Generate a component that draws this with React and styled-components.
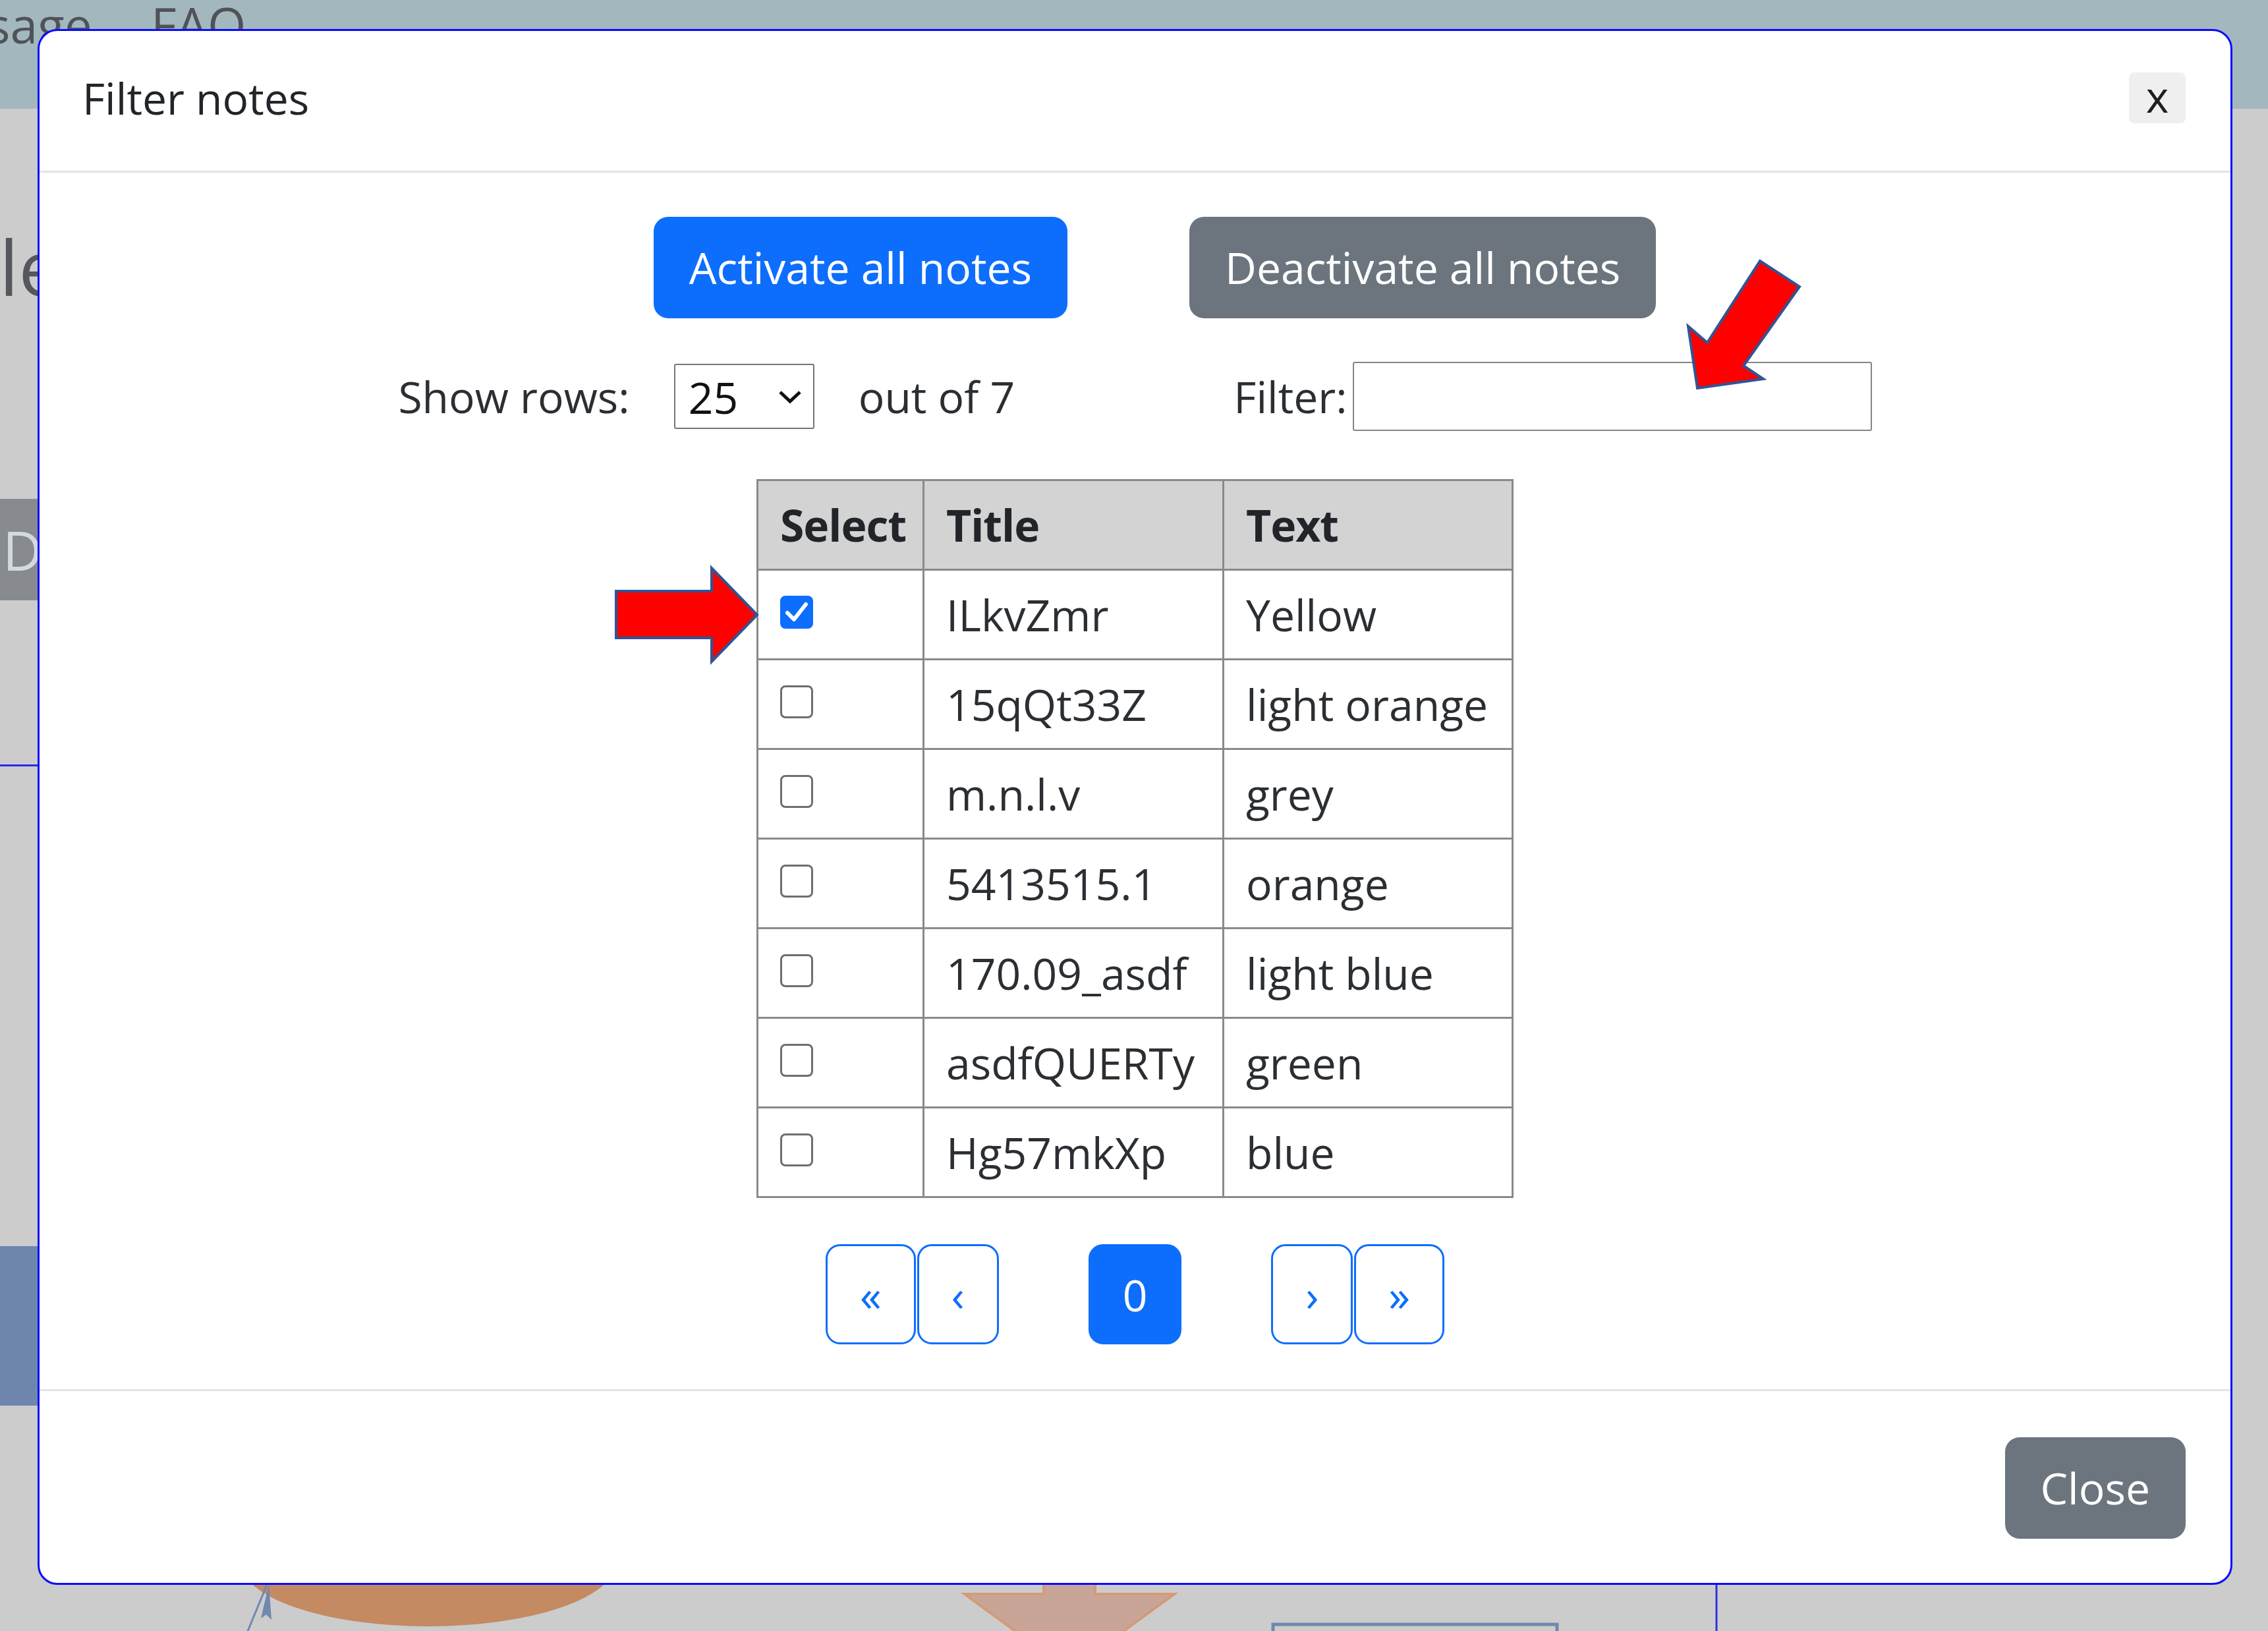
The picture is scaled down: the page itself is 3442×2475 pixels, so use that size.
import React from "react";
import styled, { createGlobalStyle } from "styled-components";

const GlobalStyle = createGlobalStyle`
  html, body {
    margin: 0;
    padding: 0;
  }
  body {
    font-family: "Open Sans", "Liberation Sans", sans-serif;
    background: #cccccc;
    color: #212529;
  }
  * {
    box-sizing: border-box;
  }
`;

const Page = styled.div`
  position: relative;
  width: 3442px;
  height: 2475px;
  overflow: hidden;
  background: #cccccc;
  display: flex;
  flex-direction: column;
`;

/* ---------- page behind the dialog ---------- */

const TopBar = styled.header`
  flex: none;
  height: 165px;
  background: #a3b8be;
`;

const NavList = styled.nav`
  display: flex;
  gap: 89px;
  margin-left: -75px;
`;

const NavLink = styled.span`
  font-size: 75px;
  line-height: 1;
  color: #4f5357;
`;

const PageContent = styled.main`
  position: relative;
  flex: 1;
  display: flex;
  flex-direction: column;
  align-items: flex-start;
`;

const PageHeading = styled.h1`
  margin: 170px 0 0 -369px;
  font-size: 116px;
  line-height: 1.2;
  font-weight: 400;
  color: #54585c;
  white-space: nowrap;
`;

const PageButton = styled.div`
  margin: 283px 0 0 -26px;
  height: 154px;
  padding: 0 60px 0 30px;
  background: #878b90;
  color: #d3d9df;
  font-size: 83px;
  line-height: 154px;
  white-space: nowrap;
`;

const PageRule = styled.div`
  margin-top: 249px;
  width: 300px;
  height: 3px;
  background: #2a2ae8;
`;

const PageBlock = styled.div`
  margin-top: 728px;
  width: 300px;
  height: 242px;
  background: #6e86ae;
`;

const DiagramCanvas = styled.svg`
  position: absolute;
  left: 0;
  bottom: 0;
  width: 2700px;
  height: 95px;
`;

/* ---------- dialog ---------- */

const Modal = styled.section`
  position: absolute;
  left: 57px;
  top: 44px;
  width: 3331px;
  background: #ffffff;
  border: 3px solid #0c0cff;
  border-radius: 30px;
  display: flex;
  flex-direction: column;
`;

const ModalHeader = styled.div`
  display: flex;
  align-items: center;
  justify-content: space-between;
  padding: 52px 68px 61px 65px;
  border-bottom: 3px solid #e1e4e8;
`;

const ModalTitle = styled.h5`
  margin: 0;
  font-size: 66px;
  line-height: 99px;
  font-weight: 400;
  color: #212529;
`;

const CloseX = styled.button`
  width: 86px;
  height: 77px;
  border: none;
  border-radius: 8px;
  background: #efefef;
  color: #1e1e1e;
  font-family: inherit;
  font-size: 66px;
  line-height: 1;
  padding: 0 0 8px;
  display: flex;
  align-items: center;
  justify-content: center;
`;

const ModalBody = styled.div`
  display: flex;
  flex-direction: column;
  align-items: center;
  padding: 67px 0 68px;
`;

const ButtonRow = styled.div`
  display: flex;
  gap: 185px;
  padding-left: 60px;
`;

const Btn = styled.button`
  border: none;
  border-radius: 22px;
  padding: 27px 54px 28px;
  font-family: inherit;
  font-size: 66px;
  line-height: 99px;
  color: #ffffff;
  background: ${({ $variant }) => ($variant === "primary" ? "#0d6efd" : "#6c757d")};
  white-space: nowrap;
`;

const ControlsRow = styled.div`
  display: flex;
  align-items: center;
  gap: 332px;
  margin-top: 66px;
  height: 105px;
`;

const ControlGroup = styled.div`
  display: flex;
  align-items: center;
  gap: ${({ $gap }) => $gap}px;
`;

const Label = styled.span`
  font-size: 66px;
  line-height: 99px;
  color: #2b2f33;
  white-space: nowrap;
`;

const SelectBox = styled.div`
  width: 213px;
  height: 99px;
  border: 2px solid #767676;
  border-radius: 3px;
  padding: 0 16px 0 20px;
  display: flex;
  align-items: center;
  justify-content: space-between;
  font-size: 66px;
  color: #111111;
`;

const FilterInput = styled.input`
  width: 788px;
  height: 105px;
  border: 2px solid #858585;
  border-radius: 3px;
  font-family: inherit;
  font-size: 66px;
  padding: 0 16px;
  outline: none;
`;

const Table = styled.table`
  margin-top: 73px;
  border-collapse: collapse;
  table-layout: fixed;
  width: 1146px;
  font-size: 66px;
  line-height: 99px;
  color: #2b2f33;

  th,
  td {
    border: 3px solid #8a8a8a;
    padding: 17px 33px;
    text-align: left;
    white-space: nowrap;
  }

  th {
    background: #d3d3d3;
    font-weight: 700;
    color: #212529;
    letter-spacing: -1px;
  }
`;

const CheckBox = styled.span`
  display: inline-flex;
  align-items: center;
  justify-content: center;
  width: 50px;
  height: 50px;
  border-radius: 8px;
  vertical-align: middle;
  margin-top: -22px;
  border: 3px solid ${({ $checked }) => ($checked ? "#0d6efd" : "#6e6e6e")};
  background: ${({ $checked }) => ($checked ? "#0d6efd" : "#ffffff")};
`;

const Pager = styled.div`
  display: flex;
  gap: 136px;
  margin-top: 70px;
`;

const PagerGroup = styled.div`
  display: flex;
  gap: 2px;
`;

const PageBtn = styled.button`
  height: 152px;
  padding: 0 49px;
  border: 3px solid #0d6efd;
  border-radius: 22px;
  background: ${({ $active }) => ($active ? "#0d6efd" : "#ffffff")};
  color: ${({ $active }) => ($active ? "#ffffff" : "#0d6efd")};
  font-family: inherit;
  font-size: 66px;
  line-height: 1;
`;

const ModalFooter = styled.div`
  display: flex;
  justify-content: flex-end;
  padding: 70px 68px 67px;
  border-top: 3px solid #e1e4e8;
`;

const Annotations = styled.svg`
  position: absolute;
  left: 0;
  top: 0;
  width: 3442px;
  height: 2475px;
  pointer-events: none;
`;

const notes = [
  { title: "ILkvZmr", text: "Yellow", active: true },
  { title: "15qQt33Z", text: "light orange" },
  { title: "m.n.l.v", text: "grey" },
  { title: "5413515.1", text: "orange" },
  { title: "170.09_asdf", text: "light blue" },
  { title: "asdfQUERTy", text: "green" },
  { title: "Hg57mkXp", text: "blue" },
];

function Check({ checked }) {
  return (
    <CheckBox $checked={checked}>
      {checked && (
        <svg width="44" height="44" viewBox="0 0 44 44">
          <path
            d="M8 23 L18 33 L36 10"
            fill="none"
            stroke="#fff"
            strokeWidth="6"
            strokeLinecap="round"
            strokeLinejoin="round"
          />
        </svg>
      )}
    </CheckBox>
  );
}

function App() {
  return (
    <>
      <GlobalStyle />
      <Page>
        <TopBar>
          <NavList>
            <NavLink>Usage</NavLink>
            <NavLink>FAQ</NavLink>
          </NavList>
        </TopBar>
        <PageContent>
          <PageHeading>Example</PageHeading>
          <PageButton>Delete</PageButton>
          <PageRule />
          <PageBlock />
          <DiagramCanvas viewBox="0 0 2700 95">
            <ellipse cx="650" cy="-10" rx="285" ry="98" fill="#c48a62" />
            <line x1="376" y1="95" x2="407" y2="20" stroke="#6f88b0" strokeWidth="3" />
            <polygon points="408,24 396,76 404,70 412,78" fill="#6f88b0" />
            <polygon
              points="1584,-20 1662,-20 1662,39 1782,39 1623,155 1464,39 1584,39"
              fill="#c8a596"
              stroke="#d39b78"
              strokeWidth="4"
            />
            <rect x="1932" y="85" width="431" height="60" fill="#cccccc" stroke="#6f88b0" strokeWidth="5" />
            <line x1="2605" y1="0" x2="2605" y2="95" stroke="#3030e8" strokeWidth="3" />
          </DiagramCanvas>
        </PageContent>

        <Modal>
          <ModalHeader>
            <ModalTitle>Filter notes</ModalTitle>
            <CloseX>x</CloseX>
          </ModalHeader>

          <ModalBody>
            <ButtonRow>
              <Btn $variant="primary">Activate all notes</Btn>
              <Btn $variant="secondary">Deactivate all notes</Btn>
            </ButtonRow>

            <ControlsRow>
              <ControlGroup $gap={67}>
                <Label>Show rows:</Label>
                <SelectBox>
                  <span>25</span>
                  <svg width="38" height="22" viewBox="0 0 38 22">
                    <path d="M4 4 L19 18 L34 4" fill="none" stroke="#111" strokeWidth="5" />
                  </svg>
                </SelectBox>
                <Label>out of 7</Label>
              </ControlGroup>
              <ControlGroup $gap={8}>
                <Label>Filter:</Label>
                <FilterInput type="text" />
              </ControlGroup>
            </ControlsRow>

            <Table>
              <colgroup>
                <col style={{ width: 252 }} />
                <col style={{ width: 455 }} />
                <col style={{ width: 439 }} />
              </colgroup>
              <thead>
                <tr>
                  <th>Select</th>
                  <th>Title</th>
                  <th>Text</th>
                </tr>
              </thead>
              <tbody>
                {notes.map((n) => (
                  <tr key={n.title}>
                    <td>
                      <Check checked={n.active} />
                    </td>
                    <td>{n.title}</td>
                    <td>{n.text}</td>
                  </tr>
                ))}
              </tbody>
            </Table>

            <Pager>
              <PagerGroup>
                <PageBtn>«</PageBtn>
                <PageBtn>‹</PageBtn>
              </PagerGroup>
              <PageBtn $active>0</PageBtn>
              <PagerGroup>
                <PageBtn>›</PageBtn>
                <PageBtn>»</PageBtn>
              </PagerGroup>
            </Pager>
          </ModalBody>

          <ModalFooter>
            <Btn $variant="secondary">Close</Btn>
          </ModalFooter>
        </Modal>

        <Annotations viewBox="0 0 3442 2475">
          <polygon
            points="935,897 1080,897 1080,862 1149,933 1080,1004 1080,968 935,968"
            fill="#ff0000"
            stroke="#2f5597"
            strokeWidth="4"
          />
          <polygon
            points="2671,396 2731,435 2646,555 2676,575 2576,589 2562,495 2591,520"
            fill="#ff0000"
            stroke="#2f5597"
            strokeWidth="4"
          />
        </Annotations>
      </Page>
    </>
  );
}

export default App;
